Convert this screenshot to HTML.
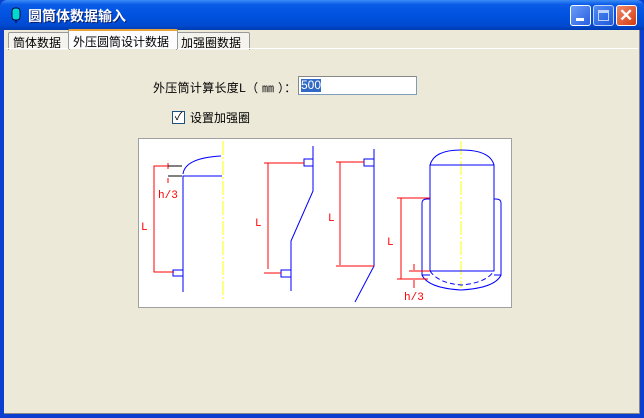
<!DOCTYPE html>
<html><head><meta charset="utf-8"><style>
*{margin:0;padding:0;box-sizing:border-box}
body{width:644px;height:418px;overflow:hidden;background:#0a3fd0;font-family:"Liberation Sans","Noto Sans CJK SC",sans-serif;font-size:12px;position:relative}
.title{position:absolute;left:0;top:0;width:644px;height:30px;background:linear-gradient(#3b8cf5 0%,#0a5be6 15%,#0053e0 50%,#0049d0 85%,#003bb0 100%);border-radius:7px 7px 0 0}
.title .t{position:absolute;left:28px;top:6px;color:#fff;font-weight:bold;font-size:14px;text-shadow:1px 1px #0a1e6a}
.btn{position:absolute;top:5px;width:21px;height:21px;border:1px solid #fff;border-radius:3px;background:linear-gradient(135deg,#6a9cf8,#2a5fe0)}
.body{position:absolute;left:4px;top:30px;width:636px;height:384px;background:#ECE9D8;border-right:1px solid #888;border-bottom:1px solid #888}
.tab{position:absolute;top:1px;height:18px;border:1px solid #9a9a9a;border-bottom:none;background:#f4f3ee;padding:1px 4px;font-size:12px;border-radius:2px 2px 0 0}
.panel{position:absolute;left:2px;top:18px;width:632px;height:364px;border-top:1px solid #fff}
</style></head><body>
<div class="title">
<svg style="position:absolute;left:11px;top:7px" width="10" height="16"><rect x="1" y="1" width="8" height="12" rx="3" fill="#00d8d0" stroke="#003" /><line x1="5" y1="13" x2="5" y2="16" stroke="#003"/></svg>
<div class="t">圆筒体数据输入</div>
<div class="btn" style="left:570px"><div style="position:absolute;left:5px;top:12px;width:8px;height:3px;background:#fff"></div></div>
<div class="btn" style="left:593px;opacity:.75"><div style="position:absolute;left:4px;top:4px;width:11px;height:11px;border:1px solid #fff;border-top-width:3px"></div></div>
<div class="btn" style="left:616px;background:linear-gradient(135deg,#f08a6a,#d43c10)"><div style="position:absolute;left:2px;top:0;color:#fff;font-weight:bold;font-size:17px;line-height:20px">✕</div></div>
</div>
<div class="body">
<div class="tab" style="left:4px;top:2px;width:62px">筒体数据</div>
<div class="tab" style="left:172px;top:2px;width:74px">加强圈数据</div>
<div class="panel"></div>
<div class="tab" style="left:64px;top:-1px;height:20px;width:110px;background:#fcfcfe;border-color:#919b9c;padding-top:2px;border-top:2px solid #e8a33a;z-index:2">外压圆筒设计数据</div>
<div style="position:absolute;left:149px;top:49px;font-size:12px;letter-spacing:0.3px">外压筒计算长度L（ ㎜ ）：</div>
<div style="position:absolute;left:294px;top:46px;width:119px;height:19px;background:#fff;border:1px solid #7f9db9;border-top-color:#888;border-left-color:#888"><span style="position:absolute;left:2px;top:2px;background:#316ac5;color:#fff;line-height:13px">500</span></div>
<div style="position:absolute;left:168px;top:81px;width:13px;height:13px;border:1px solid #1c5180;background:#fff;font-size:11px;line-height:11px;text-align:center">✓</div>
<div style="position:absolute;left:186px;top:79px">设置加强圈</div>
<svg style="position:absolute;left:134px;top:108px" width="374" height="170" viewBox="0 0 374 170">
<rect x="0.5" y="0.5" width="373" height="169" fill="#fff" stroke="#a0a0a0"/>
<g fill="none" stroke-width="1">
<line x1="85" y1="3" x2="85" y2="161" stroke="#ff0" stroke-dasharray="14,2,2,2"/>
<line x1="323" y1="3" x2="323" y2="150" stroke="#ff0" stroke-dasharray="14,2,2,2"/>
<g stroke="#0000ff">
<path d="M45 154V38H84M45 36Q47 20 83 18"/>
<rect x="35" y="132" width="10" height="6"/>
<path d="M175 8V53L153 103V153"/><rect x="166" y="21" width="9" height="7"/><rect x="143" y="132" width="10" height="7"/>
<path d="M236 11V128L217 164"/><rect x="226" y="21" width="10" height="7"/>
<rect x="292" y="27" width="64" height="106"/>
<path d="M292 27Q296 12 323 12Q352 12 356 27"/>
<path d="M292 61H289Q284 61 284 65V137H292M356 61H358Q363 61 363 65V137H356"/>
<path d="M284 137Q290 150 323 152Q357 150 363 137"/>
<path d="M292 133Q300 145 323 147Q348 145 356 133" stroke-dasharray="5,3"/>
</g>
<g stroke="#f00">
<path d="M30 28H16V134H36"/>
<path d="M166 25H126M130 25V131M126 135H143"/>
<path d="M226 24H198M202 24V127M198 128H236"/>
<path d="M292 60H259M263 60V141M259 141H290M271 133H292M276 126V132M276 142V150"/>
<path d="M30 25V31M30 40V45"/>
</g>
<path d="M30 28H44M30 38H44" stroke="#000"/>
</g>
<g fill="#f00" font-family="Liberation Mono,monospace" font-size="11">
<text x="20" y="60">h/3</text><text x="3" y="92">L</text>
<text x="117" y="88">L</text><text x="190" y="83">L</text><text x="249" y="107">L</text>
<text x="266" y="162">h/3</text>
</g>
</svg>
</div>
</body></html>
